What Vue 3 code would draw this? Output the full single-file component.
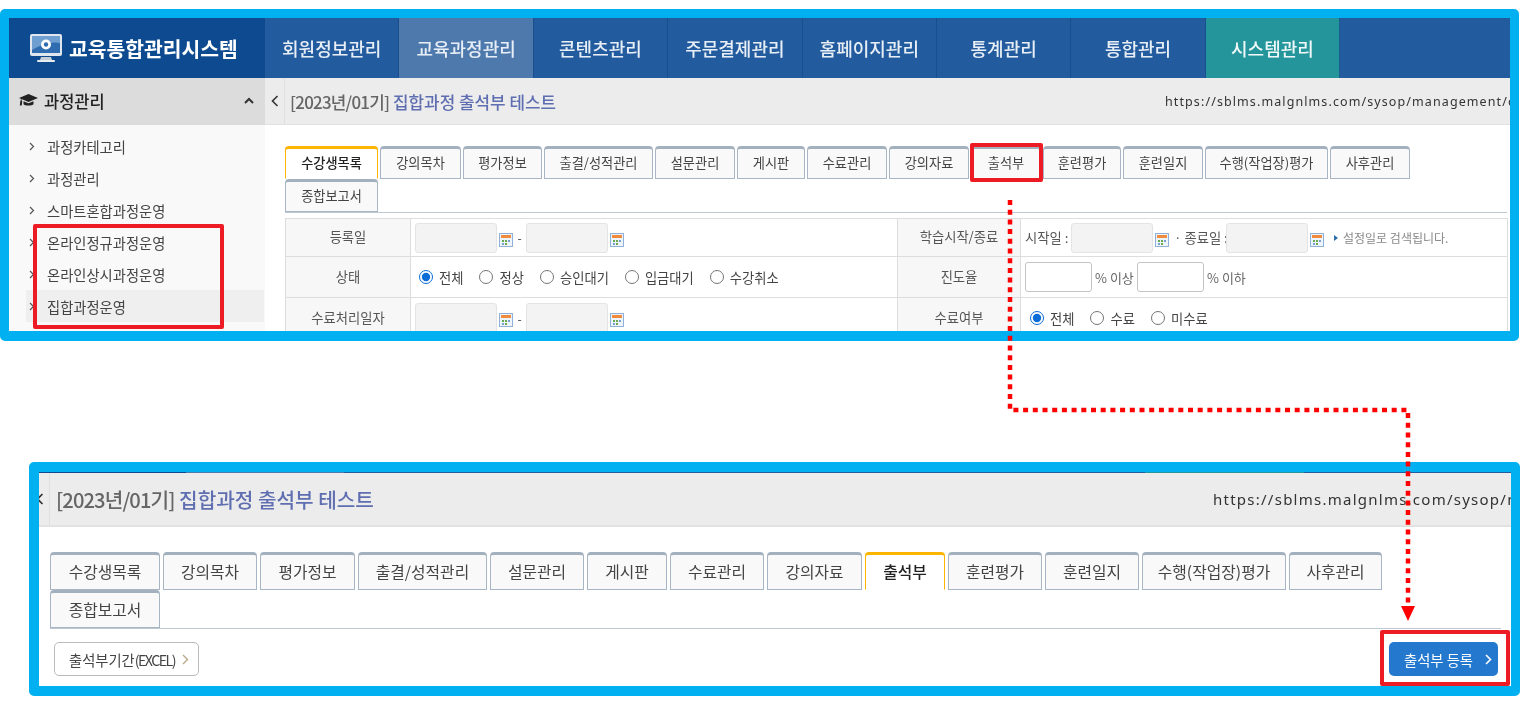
<script setup>
const names = ['수강생목록','강의목차','평가정보','출결/성적관리','설문관리','게시판','수료관리','강의자료','출석부','훈련평가','훈련일지','수행(작업장)평가','사후관리','종합보고서']
const w1 = [93,81,79,109,80,68,80,80,70,78,80,123,80,93]
const w2 = [110,94,95,129,94,80,94,95,80,94,94,144,93,110]
const tabs1 = names.map((name,i)=>({name,width:w1[i]+'px',active:i===0}))
const tabs2 = names.map((name,i)=>({name,width:w2[i]+'px',active:i===8}))
const navs = ['회원정보관리','교육과정관리','콘텐츠관리','주문결제관리','홈페이지관리','통계관리','통합관리','시스템관리']
const menu = ['과정카테고리','과정관리','스마트혼합과정운영','온라인정규과정운영','온라인상시과정운영','집합과정운영']
const status = ['전체','정상','승인대기','입금대기','수강취소']
const done = ['전체','수료','미수료']
</script>

<template>
  <div class="page">
    <section class="panel one">
      <header class="topbar">
        <div class="logo">
          <svg class="monitor" width="34" height="30" viewBox="0 0 34 30">
            <rect x="1" y="1" width="32" height="22" rx="2" fill="#dfe6ee"/>
            <rect x="3" y="3" width="28" height="17" fill="#2f6db0"/>
            <path d="M3 3h28v7C22 8 12 12 3 17z" fill="#6f9fd0"/>
            <circle cx="17" cy="11.500" r="5" fill="#fff"/>
            <circle cx="17" cy="11.500" r="2.200" fill="#2f6db0"/>
            <path d="M12 24h10l1 3H11z" fill="#c6ced6"/>
            <rect x="8" y="27" width="18" height="2" rx="1" fill="#e6ebf0"/>
          </svg>
          <span>교육통합관리시스템</span>
        </div>
        <nav class="nav">
          <a v-for="(n,i) in navs" :key="n" class="navitem" :class="{cur:i===1,sys:i===7}">{{ n }}</a>
        </nav>
      </header>
      <div class="body">
        <aside class="side">
          <div class="sidehead">
            <svg width="19" height="15" viewBox="0 0 19 15">
              <path d="M9.500 1 19 5 9.500 9 2.500 6v1.200c.5.300.7.700.7 1.200l-.5 4H.8l.5-4c0-.5.2-.9.6-1.200V5.700L0 5z" fill="#222"/>
              <path d="M4.500 8.200v3c1 1.800 9 1.800 10 0v-3L9.500 10.300z" fill="#222"/>
            </svg>
            <b>과정관리</b>
            <svg class="up" width="10" height="7" viewBox="0 0 10 7"><path d="M1 6l4-4 4 4" fill="none" stroke="#333" stroke-width="2"/></svg>
          </div>
          <ul class="menu">
            <li v-for="(m,i) in menu" :key="m" :class="{on:i===5}">
              <svg width="6" height="9" viewBox="0 0 6 9"><path d="M1 1l3.500 3.500L1 8" fill="none" stroke="#555" stroke-width="1.200"/></svg>
              <span>{{ m }}</span>
            </li>
          </ul>
        </aside>
        <main class="main">
          <div class="titlebar">
            <div class="back">
              <svg width="8" height="12" viewBox="0 0 8 12"><path d="M6.500 1 1.500 6l5 5" fill="none" stroke="#333" stroke-width="1.600"/></svg>
            </div>
            <h1 class="title"><span class="crumb">[2023년/01기]</span> 집합과정 출석부 테스트</h1>
            <div class="url">https://sblms.malgnlms.com/sysop/management/course</div>
          </div>
          <div class="content">
            <div class="tabs">
              <a v-for="t in tabs1" :key="t.name" class="tab" :class="{active:t.active}" :style="{width:t.width}">{{ t.name }}</a>
            </div>
            <table class="grid">
              <colgroup><col class="c1"><col class="c2"><col class="c3"><col class="c4"></colgroup>
              <tbody>
                <tr class="r1">
                  <th>등록일</th>
                  <td><div class="cell">
                    <i class="inp"></i>
                    <svg class="cal" width="14" height="14" viewBox="0 0 14 14"><rect x=".5" y=".5" width="13" height="13" fill="#eef4fb" stroke="#8fb0d8"/><rect x="2" y="2" width="10" height="3" fill="#f08a3c"/><rect x="3" y="7" width="2" height="2" fill="#6aa84f"/><rect x="6" y="7" width="2" height="2" fill="#6aa84f"/><rect x="9" y="7" width="2" height="2" fill="#7aa0d0"/><rect x="3" y="10" width="2" height="2" fill="#7aa0d0"/><rect x="6" y="10" width="2" height="2" fill="#6aa84f"/></svg>
                    <span class="dash">-</span>
                    <i class="inp"></i>
                    <svg class="cal" width="14" height="14" viewBox="0 0 14 14"><rect x=".5" y=".5" width="13" height="13" fill="#eef4fb" stroke="#8fb0d8"/><rect x="2" y="2" width="10" height="3" fill="#f08a3c"/><rect x="3" y="7" width="2" height="2" fill="#6aa84f"/><rect x="6" y="7" width="2" height="2" fill="#6aa84f"/><rect x="9" y="7" width="2" height="2" fill="#7aa0d0"/><rect x="3" y="10" width="2" height="2" fill="#7aa0d0"/><rect x="6" y="10" width="2" height="2" fill="#6aa84f"/></svg>
                  </div></td>
                  <th>학습시작/종료</th>
                  <td><div class="cell">
                    <span class="lbl">시작일 :</span>
                    <i class="inp near"></i>
                    <svg class="cal" width="14" height="14" viewBox="0 0 14 14"><rect x=".5" y=".5" width="13" height="13" fill="#eef4fb" stroke="#8fb0d8"/><rect x="2" y="2" width="10" height="3" fill="#f08a3c"/><rect x="3" y="7" width="2" height="2" fill="#6aa84f"/><rect x="6" y="7" width="2" height="2" fill="#6aa84f"/><rect x="9" y="7" width="2" height="2" fill="#7aa0d0"/><rect x="3" y="10" width="2" height="2" fill="#7aa0d0"/><rect x="6" y="10" width="2" height="2" fill="#6aa84f"/></svg>
                    <span class="lbl to">· 종료일 :</span>
                    <i class="inp near"></i>
                    <svg class="cal" width="14" height="14" viewBox="0 0 14 14"><rect x=".5" y=".5" width="13" height="13" fill="#eef4fb" stroke="#8fb0d8"/><rect x="2" y="2" width="10" height="3" fill="#f08a3c"/><rect x="3" y="7" width="2" height="2" fill="#6aa84f"/><rect x="6" y="7" width="2" height="2" fill="#6aa84f"/><rect x="9" y="7" width="2" height="2" fill="#7aa0d0"/><rect x="3" y="10" width="2" height="2" fill="#7aa0d0"/><rect x="6" y="10" width="2" height="2" fill="#6aa84f"/></svg>
                    <span class="note"><em class="tri"></em>설정일로 검색됩니다.</span>
                  </div></td>
                </tr>
                <tr class="r2">
                  <th>상태</th>
                  <td><div class="radios">
                    <label v-for="(s,i) in status" :key="s"><input type="radio" name="st" :checked="i===0"><span>{{ s }}</span></label>
                  </div></td>
                  <th>진도율</th>
                  <td><div class="cell">
                    <i class="inp plain"></i><span class="pct">% 이상</span>
                    <i class="inp plain"></i><span class="pct">% 이하</span>
                  </div></td>
                </tr>
                <tr class="r3">
                  <th>수료처리일자</th>
                  <td><div class="cell">
                    <i class="inp"></i>
                    <svg class="cal" width="14" height="14" viewBox="0 0 14 14"><rect x=".5" y=".5" width="13" height="13" fill="#eef4fb" stroke="#8fb0d8"/><rect x="2" y="2" width="10" height="3" fill="#f08a3c"/><rect x="3" y="7" width="2" height="2" fill="#6aa84f"/><rect x="6" y="7" width="2" height="2" fill="#6aa84f"/><rect x="9" y="7" width="2" height="2" fill="#7aa0d0"/><rect x="3" y="10" width="2" height="2" fill="#7aa0d0"/><rect x="6" y="10" width="2" height="2" fill="#6aa84f"/></svg>
                    <span class="dash">-</span>
                    <i class="inp"></i>
                    <svg class="cal" width="14" height="14" viewBox="0 0 14 14"><rect x=".5" y=".5" width="13" height="13" fill="#eef4fb" stroke="#8fb0d8"/><rect x="2" y="2" width="10" height="3" fill="#f08a3c"/><rect x="3" y="7" width="2" height="2" fill="#6aa84f"/><rect x="6" y="7" width="2" height="2" fill="#6aa84f"/><rect x="9" y="7" width="2" height="2" fill="#7aa0d0"/><rect x="3" y="10" width="2" height="2" fill="#7aa0d0"/><rect x="6" y="10" width="2" height="2" fill="#6aa84f"/></svg>
                  </div></td>
                  <th>수료여부</th>
                  <td><div class="radios alt">
                    <label v-for="(s,i) in done" :key="s"><input type="radio" name="dn" :checked="i===0"><span>{{ s }}</span></label>
                  </div></td>
                </tr>
              </tbody>
            </table>
          </div>
        </main>
      </div>
    </section>

    <section class="panel two">
      <div class="strip"></div>
      <div class="titlebar big">
        <div class="back">
          <svg width="8" height="12" viewBox="0 0 8 12"><path d="M6.500 1 1.500 6l5 5" fill="none" stroke="#333" stroke-width="1.600"/></svg>
        </div>
        <h1 class="title"><span class="crumb">[2023년/01기]</span> 집합과정 출석부 테스트</h1>
        <div class="url">https://sblms.malgnlms.com/sysop/management/course</div>
      </div>
      <div class="tabs big">
        <a v-for="t in tabs2" :key="t.name" class="tab" :class="{active:t.active}" :style="{width:t.width}">{{ t.name }}</a>
      </div>
      <div class="actions">
        <button class="btn excel" type="button"><span>출석부기간<span class="latin">(EXCEL)</span></span><svg width="7" height="11" viewBox="0 0 7 11"><path d="M1 1l4.500 4.500L1 10" fill="none" stroke="#b8a98a" stroke-width="1.400"/></svg></button>
        <button class="btn primary" type="button">출석부 등록<svg width="7" height="11" viewBox="0 0 7 11"><path d="M1 1l4.500 4.500L1 10" fill="none" stroke="#fff" stroke-width="1.600"/></svg></button>
      </div>
    </section>

    <i class="redbox rb-side"></i>
    <i class="redbox rb-tab"></i>
    <i class="redbox rb-btn"></i>
    <svg class="route" width="1529" height="711" viewBox="0 0 1529 711">
      <path d="M1010 200V410H1408V607" fill="none" stroke="#f00" stroke-width="4.500" stroke-dasharray="5 4.700"/>
      <path d="M1401 606h14l-7 15z" fill="#f00"/>
    </svg>
  </div>
</template>

<style scoped>
.page{position:relative;width:1529px;height:711px;overflow:hidden;background:#fff;color:#444;font-family:"Noto Sans CJK KR","Noto Sans",sans-serif}
.panel{box-sizing:border-box;border:9px solid #00b0f0;border-bottom-width:10px;border-radius:5px;overflow:hidden;background:#fff;filter:blur(.3px)}
.one{width:1519px;height:332px;margin-top:9px}
.two{width:1491px;height:234px;margin:121px 0 0 29px;border-top-width:10px;border-left-width:10px}
.topbar{display:flex;height:60px;background:#235c9e}
.logo{width:256px;flex:none;display:flex;align-items:center;gap:6px;padding-left:20px;box-sizing:border-box;background:#0d4a8f;color:#fff;font-size:20.400px;font-weight:700}
.nav{display:flex}
.navitem{box-sizing:border-box;width:134.400px;display:flex;align-items:center;justify-content:center;color:#e8eef6;font-size:18px;font-weight:500;border-right:1px solid #1a4f8f}
.navitem.cur{background:#4e79ad}
.navitem.sys{background:#24959b;border-right-color:#1a5f8f;color:#eef8f8}
.body{display:flex}
.side{width:256px;flex:none;background:#f9f9f9;height:253px}
.sidehead{display:flex;align-items:center;height:47px;background:#dcdcdc;padding:0 11px 2px 10px;box-sizing:border-box;gap:6px;color:#222}
.sidehead b{font-size:16.500px;font-weight:500;flex:1}
.menu{list-style:none;margin:0;padding:5px 0 0 17px}
.menu li{display:flex;align-items:center;gap:12px;height:32px;font-size:14.300px;color:#444;padding-left:3px;margin-right:1px}
.menu li.on{background:#efefef}
.main{flex:1;min-width:0;background:#fff}
.titlebar{display:flex;align-items:center;height:47px;box-sizing:border-box;background:#ececec;border-bottom:1px solid #e2e2e2}
.back{box-sizing:border-box;width:20px;height:100%;flex:none;display:flex;align-items:center;justify-content:center;border-right:1px solid #dfdfdf}
.title{margin:0 0 0 5px;font-size:16.900px;font-weight:500;color:#5f6eb0;white-space:nowrap;flex:1}
.crumb{color:#666;letter-spacing:-.750px}
.url{width:345px;flex:none;overflow:hidden;white-space:nowrap;font-family:"Noto Sans",sans-serif;font-size:12.500px;letter-spacing:1.100px;color:#333}
.content{padding:21px 3px 0 20px}
.tabs{display:flex;flex-wrap:wrap;column-gap:2px;padding-right:20px;border-bottom:1px solid #bcc8d4}
.tab{box-sizing:border-box;height:33px;display:flex;align-items:center;justify-content:center;background:#f9f9f9;border:1px solid #a8b6c4;border-top:3px solid #a3b1bf;border-radius:4px 4px 0 0;font-size:13.200px;color:#444;white-space:nowrap;padding-bottom:3px}
.tab.active{background:#fff;border-color:#ffb400;border-bottom-color:#fff;color:#222;font-weight:500}
.grid{width:1222px;table-layout:fixed;border-collapse:collapse;margin-top:5px;font-size:13.300px}
.c1{width:125px}.c2{width:487px}.c3{width:123px}.c4{width:487px}
.grid th,.grid td{box-sizing:border-box;border:1px solid #ddd;padding:0}
.grid th{background:#f7f7f7;font-weight:400;color:#555;padding-bottom:2px}
.r1 th,.r1 td{height:38px}
.r2 th,.r2 td{height:41px}
.r3 th,.r3 td{height:41px}
.cell{display:flex;align-items:center;padding-left:4px}
.inp{display:block;box-sizing:border-box;width:82px;height:30px;background:#f3f3f3;border:1px solid #e4e4e4;border-radius:3px;flex:none}
.inp.plain{width:67px;background:#fff;border-color:#c4c4c4}
.cal{margin-left:2px;margin-top:4px;flex:none}
.dash{width:13px;text-align:center;font-size:12px}
.lbl{font-size:13.300px;color:#555;white-space:nowrap;width:46px}
.lbl.to{width:52px;margin-left:5px}
.note{display:flex;align-items:center;margin-left:10px;font-size:12px;color:#888;white-space:nowrap}
.tri{width:0;height:0;border-left:4px solid #2b6ea8;border-top:3px solid transparent;border-bottom:3px solid transparent;margin-right:5px}
.pct{font-size:13px;color:#666;width:45px;padding-left:3px;box-sizing:border-box;white-space:nowrap}
.radios{display:flex;gap:16px;padding-left:8px;font-size:13.300px;color:#444}
.radios.alt{padding-left:9px}
.radios label{display:flex;align-items:center;gap:6px}
.radios input{width:14px;height:14px;margin:0;accent-color:#0a6cd6}
.strip{height:1px;background:linear-gradient(90deg,#0d4a8f 0 147px,#4e79ad 147px 305px,#235c9e 305px 1106px,#24959b 1106px 1265px,#235c9e 1265px)}
.titlebar.big{height:54px;border-bottom-width:2px}
.big .back{width:11px}
.big .back svg{margin-left:-9px}
.big .title{margin-left:6px;font-size:20.200px}
.big .crumb{letter-spacing:-.900px}
.big .url{width:298px;font-size:15px;letter-spacing:1.250px}
.tabs.big{margin:25px 10px 0 11px;column-gap:3px}
.big .tab{height:38px;font-size:15.800px;padding-bottom:2px}
.actions{display:flex;justify-content:space-between;padding:13px 13px 0 15px}
.btn{box-sizing:border-box;height:34px;display:flex;align-items:center;border-radius:5px;font-family:inherit;font-size:14.300px}
.excel{width:145px;background:#fff;border:1px solid #bbb;color:#444;gap:7px;padding:0 0 0 14px}
.latin{letter-spacing:-1.600px}
.primary{width:109px;background:#2479cf;border:0;color:#fff;gap:12px;padding:0 0 0 15px}
.redbox{position:absolute;box-sizing:border-box;display:block;border:4.500px solid #ed1c24;border-radius:2px;filter:blur(.3px)}
.rb-side{left:33px;top:224px;width:191px;height:105px}
.rb-tab{left:970px;top:143px;width:73px;height:39px}
.rb-btn{left:1380px;top:630px;width:130px;height:56px}
.route{position:absolute;left:0;top:0;pointer-events:none}
</style>
